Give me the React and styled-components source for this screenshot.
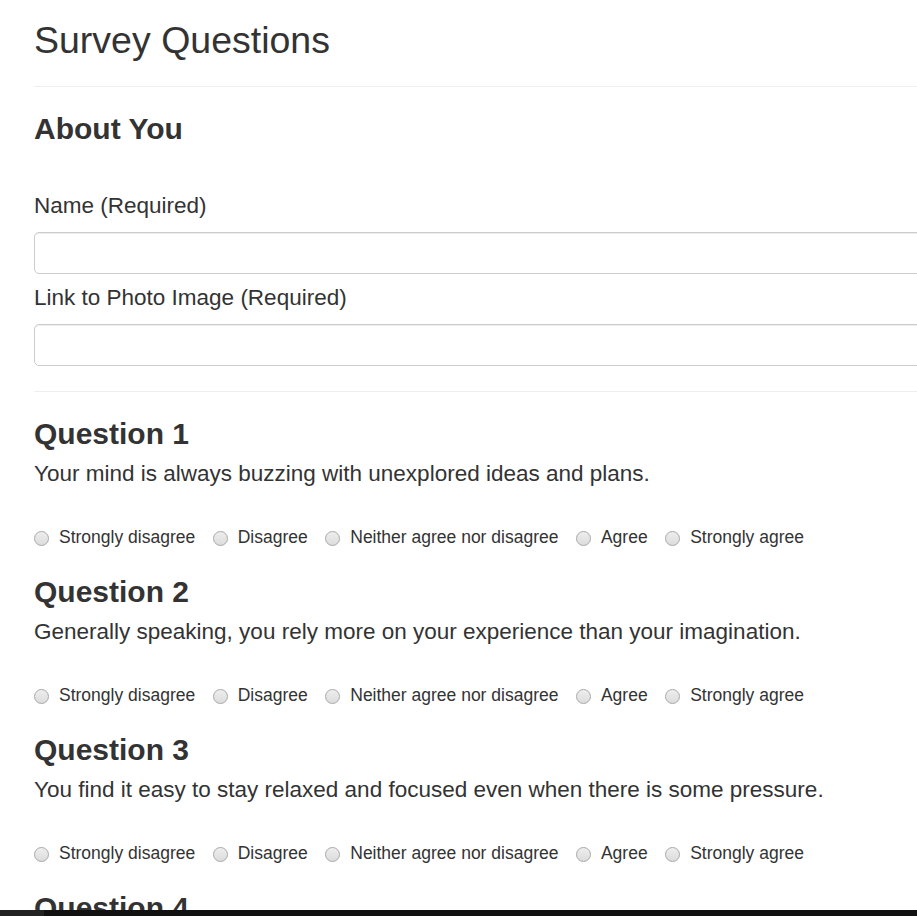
import React from 'react';
import styled, { createGlobalStyle } from 'styled-components';

const GlobalStyle = createGlobalStyle`
  html, body {
    margin: 0;
    padding: 0;
    background: #fff;
  }
  body {
    font-family: "Liberation Sans", Arial, sans-serif;
    color: #333;
    overflow: hidden;
  }
`;

const Page = styled.div`
  overflow: hidden;
  width: 100%;
`;

const Container = styled.div`
  padding-left: 34px;
  margin-right: -40px;
`;

const Title = styled.h1`
  font-size: 37.5px;
  font-weight: 400;
  line-height: 41.25px;
  margin: 20px 0 25px;
`;

const Rule = styled.hr`
  border: 0;
  border-top: 1px solid #eee;
  height: 0;
  margin: 0 0 25px;
`;

const SectionTitle = styled.h3`
  font-size: 30px;
  font-weight: 700;
  line-height: 33px;
  margin: 0 0 ${(p) => p.$after}px;
`;

const Field = styled.div`
  display: flex;
  flex-direction: column;
  margin-bottom: ${(p) => p.$after}px;
`;

const Label = styled.label`
  font-size: 22.5px;
  line-height: 32px;
  margin-bottom: 10px;
`;

const Input = styled.input`
  box-sizing: border-box;
  height: 42px;
  width: 100%;
  border: 1px solid #ccc;
  border-radius: 5px;
  box-shadow: inset 0 1px 1px rgba(0, 0, 0, 0.075);
  font: inherit;
  font-size: 17.5px;
  padding: 0 15px;
  outline: none;
`;

const Prompt = styled.p`
  font-size: 22.5px;
  line-height: 32px;
  margin: 8px 0 35px;
`;

const Choices = styled.div`
  display: flex;
  align-items: center;
  gap: 17.5px;
  height: 25px;
  margin-bottom: 25px;
`;

const Choice = styled.label`
  display: inline-flex;
  align-items: center;
  gap: 10px;
  font-size: 17.5px;
  line-height: 25px;
  white-space: nowrap;
`;

const Radio = styled.input.attrs({ type: 'radio' })`
  appearance: none;
  -webkit-appearance: none;
  box-sizing: border-box;
  width: 15px;
  height: 15px;
  min-width: 15px;
  margin: 3px 0 0;
  border: 1px solid #a8a8a8;
  border-radius: 50%;
  background: linear-gradient(#eeeeee, #dcdcdc);
  flex: none;
`;

const BottomBar = styled.div`
  position: fixed;
  left: 0;
  right: 0;
  bottom: 0;
  height: 6px;
  display: flex;
`;

const BarStub = styled.div`
  width: 44px;
  background: #222;
`;

const BarTrack = styled.div`
  flex: 1;
  background: #111;
`;

const options = [
  'Strongly disagree',
  'Disagree',
  'Neither agree nor disagree',
  'Agree',
  'Strongly agree',
];

const questions = [
  'Your mind is always buzzing with unexplored ideas and plans.',
  'Generally speaking, you rely more on your experience than your imagination.',
  'You find it easy to stay relaxed and focused even when there is some pressure.',
  'You rarely do something just out of sheer curiosity.',
];

export default function App() {
  return (
    <Page>
      <GlobalStyle />
      <Container>
        <Title>Survey Questions</Title>
        <Rule />
        <SectionTitle $after={45}>About You</SectionTitle>
        <Field $after={7.5}>
          <Label>Name (Required)</Label>
          <Input />
        </Field>
        <Field $after={25}>
          <Label>Link to Photo Image (Required)</Label>
          <Input />
        </Field>
        <Rule />
        {questions.map((q, i) => (
          <section key={i}>
            <SectionTitle $after={0}>Question {i + 1}</SectionTitle>
            <Prompt>{q}</Prompt>
            <Choices>
              {options.map((o) => (
                <Choice key={o}>
                  <Radio name={`q${i + 1}`} value={o} />
                  {o}
                </Choice>
              ))}
            </Choices>
          </section>
        ))}
      </Container>
      <BottomBar>
        <BarStub />
        <BarTrack />
      </BottomBar>
    </Page>
  );
}
